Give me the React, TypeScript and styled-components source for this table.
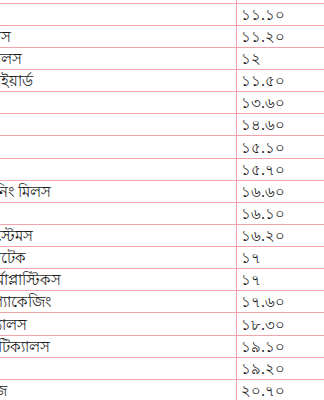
import React from "react";
import styled, {createGlobalStyle} from "styled-components";

const GlobalStyle = createGlobalStyle`
  html, body {
    margin: 0;
    padding: 0;
    background: #fff;
    overflow: hidden;
  }
  body {
    font-family: "Noto Sans", "DejaVu Sans", sans-serif;
  }
`

const Viewport = styled.div`
  width: 324px;
  height: 400px;
  overflow: hidden;
`

// the table is wider than the window; its name column starts off-screen
const Table = styled.div`
  margin: -19.4px 0 0 -150px;
  width: 520px;
`

const Row = styled.div`
  display: flex;
  height: 22.13px;
  box-sizing: border-box;
  border-top: 1px solid #f2a2aa;
`

const NameCell = styled.div`
  width: 386px;
  display: flex;
  font-size: 15px;
  color: #1a1a1a;
  white-space: nowrap;
`

const NameText = styled.div<{ $end: number }>`
  width: ${p => p.$end + 150}px;
  flex: none;
  display: flex;
  align-items: center;
  justify-content: flex-end;
  padding-top: 2px;
`

const ValueCell = styled.div`
  flex: 1;
  box-sizing: border-box;
  padding: 2px 0 0 4px;
  border-left: 1px solid #f2a2aa;
  display: flex;
  align-items: center;
  font-size: 15px;
  color: #1a1a1a;
`

const rows: [string, string, number][] = [
  ['বিডি থাই অ্যালুমিনিয়াম', '১০.৯০', -10],
  ['আরামিট সিমেন্ট', '১১.১০', -10],
  ['বাংলাদেশ বিল্ডিং সিস্টেমস ক্লাস', '১১.২০', 11],
  ['সোনারগাঁও টেক্সটাইলস মিলস', '১২', 22],
  ['ওয়েস্টার্ন মেরিন শিপইয়ার্ড', '১১.৫০', 33],
  ['জেনারেশন নেক্সট', '১৩.৬০', -10],
  ['ফ্যামিলিটেক্স', '১৪.৬০', -10],
  ['আলিফ ইন্ডাস্ট্রিজ', '১৫.১০', -10],
  ['প্রাইম টেক্সটাইল', '১৫.৭০', -10],
  ['তাল্লু স্পিনিং মিলস', '১৬.৬০', 51],
  ['এমএল ডায়িং', '১৬.১০', 0],
  ['আমরা টেকনোলজি সিস্টেমস', '১৬.২০', 33],
  ['ডেফোডিল কম্পিউটার্স ডাটেক', '১৭', 26],
  ['বেঙ্গল উইন্ডসর থার্মোপ্লাস্টিকস', '১৭', 61],
  ['খুলনা প্রিন্টিং অ্যান্ড প্যাকেজিং', '১৭.৬০', 51],
  ['সেন্ট্রাল কেমিক্যালস', '১৮.৩০', 27],
  ['অ্যাকটিভ ফাইন ফার্মাসিউটিক্যালস', '১৯.১০', 50],
  ['রিজেন্ট টেক্সটাইল', '১৯.২০', -10],
  ['সাফকো স্পিনিং মিলস ইন্ডাস্ট্রিজ', '২০.৭০', 7],
]

export default function App() {
  return (
    <Viewport>
      <GlobalStyle/>
      <Table>
        {rows.map(([name, value, end], i) => (
          <Row key={i}>
            <NameCell>
              <NameText $end={end}>{name}</NameText>
            </NameCell>
            <ValueCell>{value}</ValueCell>
          </Row>
        ))}
      </Table>
    </Viewport>
  )
}
